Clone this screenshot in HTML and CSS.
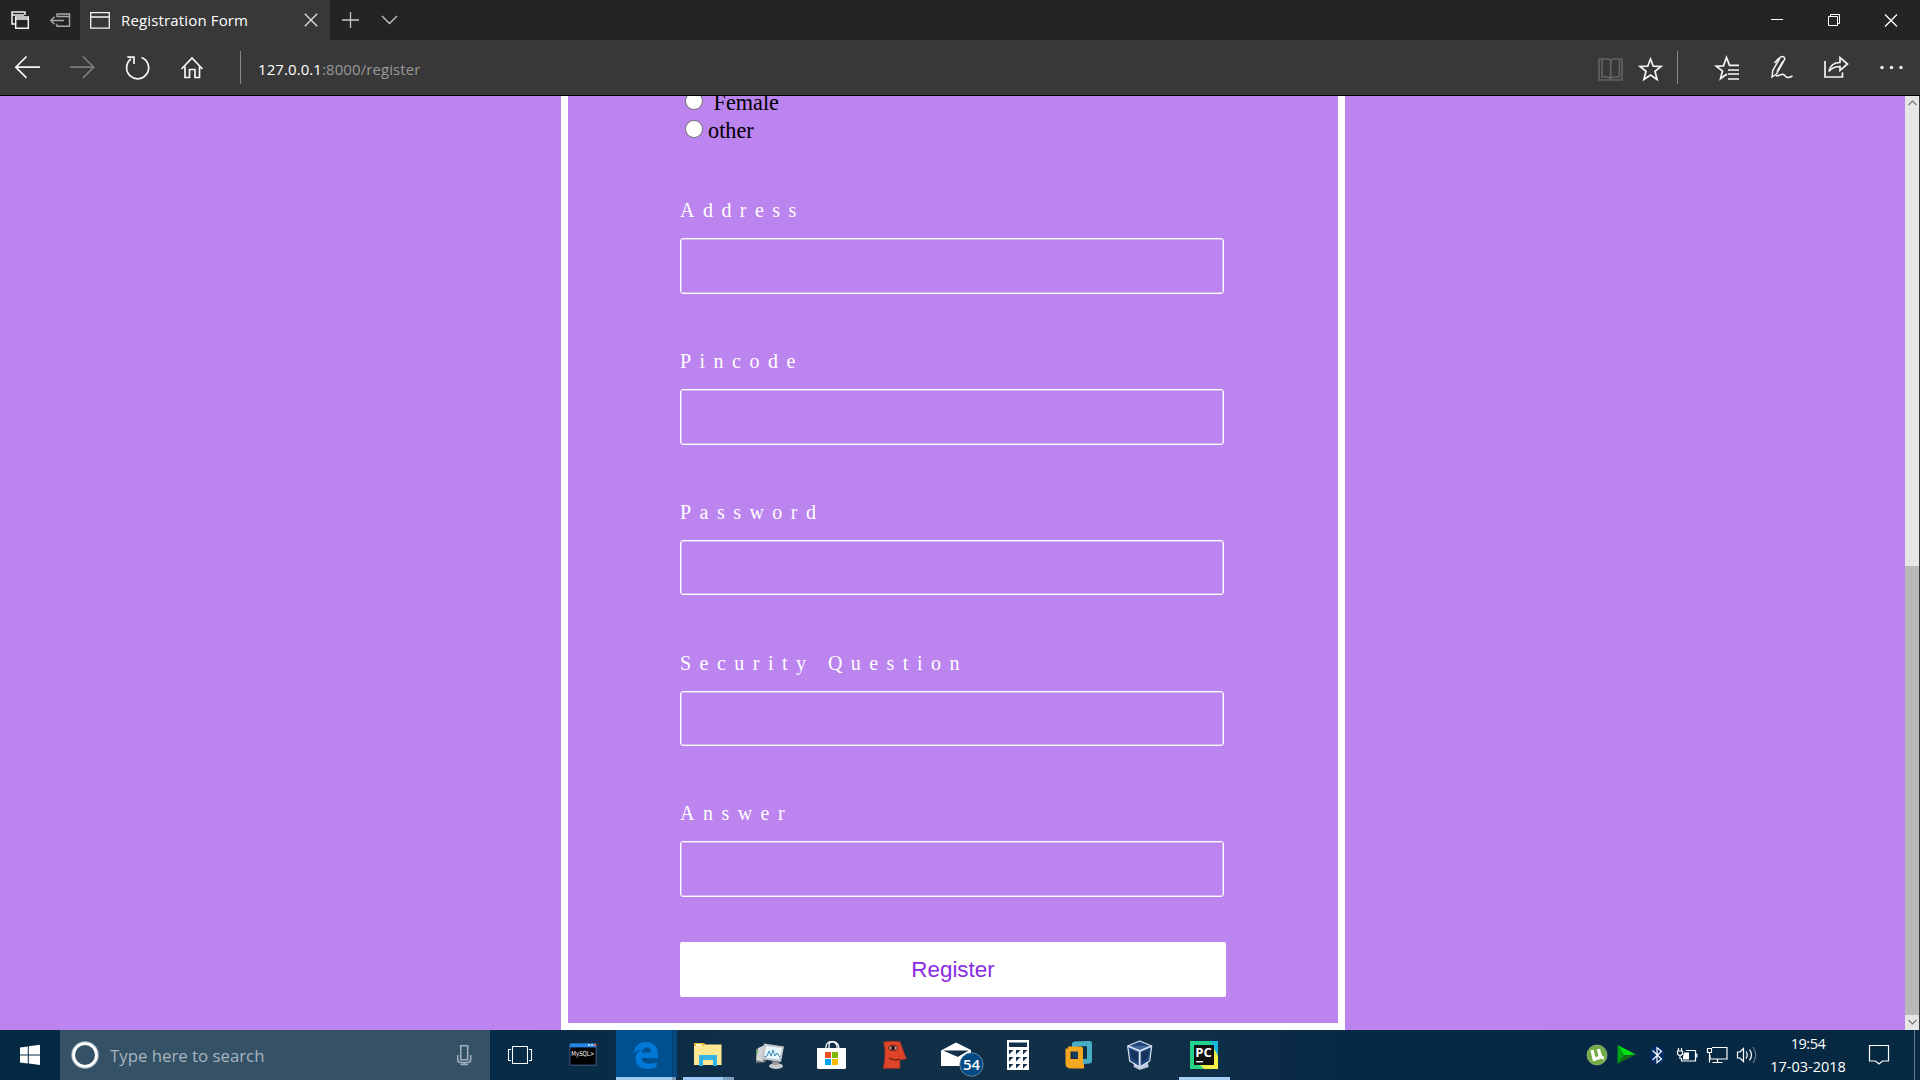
FILE: index.html
```html
<!DOCTYPE html>
<html lang="en">
<head>
<meta charset="utf-8">
<title>Registration Form</title>
<link rel="stylesheet" href="styles.css">
</head>
<body>
<div class="screen">
  <header class="tabs">
    <svg class="tab-tools" width="80" height="40" viewBox="0 0 80 40">
      <g fill="none" stroke="#f2f2f2" stroke-width="1.5"><path d="M15 24h-3V12h13v3"/><path d="M12 15h12" /><path d="M15.700 17h12.600v11.200H15.700zM15.700 19h12.600"/></g>
      <g fill="none" stroke="#a9a9a9" stroke-width="1.400"><path d="M57 17v-3h12.500v12.300H57v-2.500M57 16.500h12.500M51 20.500h13M54.500 16.800l-3.700 3.700 3.700 3.700"/></g>
    </svg>
    <div class="tab">
      <svg width="20" height="17" viewBox="0 0 20 17" fill="none" stroke="#f5f5f5" stroke-width="1.300"><path d="M.7.7h18.600v15.500H.7zM.7 5h18.600"/></svg>
      <span class="tab-title">Registration Form</span>
      <svg width="14" height="14" viewBox="0 0 14 14" stroke="#e0e0e0" stroke-width="1.300"><path d="M.8.8l12.400 12.400M13.200.8L.8 13.200"/></svg>
    </div>
    <svg width="90" height="40" viewBox="0 0 90 40" fill="none" stroke="#c8c8c8" stroke-width="1.300"><path d="M12 20h17M20.500 12v16M52 16l7.500 7.500L67 16"/></svg>
    <svg class="push" width="160" height="40" viewBox="0 0 160 40" fill="none" stroke="#fff" stroke-width="1"><path d="M11 19.500h12M68.500 16.500h9v9h-9zM70.500 16.500v-2h9v9h-2"/><path stroke-width="1.300" d="M125 14.500l12 12M137 14.500l-12 12"/></svg>
  </header>
  <nav class="toolbar">
    <svg width="241" height="55" viewBox="0 40 241 55" fill="none" stroke="#f5f5f5" stroke-width="1.700">
      <path d="M16 67.200h24M26.500 56.500L15.800 67.200l10.700 10.700"/>
      <path stroke="#7c7c7c" d="M70 67.200h23.500M83 56.500l10.700 10.700L83 77.900"/>
      <path d="M141.500 57.500a11 11 0 1 1-10.500 1.500M127.300 57.200h6.700v6.800"/>
      <path d="M181.500 69L192 58l10.500 11M185 66.500v11h4.500v-8h5.500v8h4.500v-11"/>
      <path stroke="#888" stroke-width="1" d="M240.500 51v33"/>
    </svg>
    <span class="address">127.0.0.1<span class="path">:8000/register</span></span>
    <svg class="push" width="330" height="55" viewBox="1590 40 330 55" fill="none" stroke="#f5f5f5" stroke-width="1.700" stroke-linejoin="miter">
      <g stroke="#626262"><path d="M1601 59h-2v21h23V59h-2M1602 59h6.500l2.200 1.500 2.200-1.500h6.500v18h-6.500l-2.200 1.500-2.200-1.500H1602zM1610.700 60v18"/></g>
      <path d="M1650.500 59l2.800 7.200 7.700.3-6 4.800 2.100 8.200-6.600-4.500-6.600 4.500 2.100-8.200-6-4.800 7.700-.3z"/>
      <path stroke="#888" stroke-width="1" d="M1677.500 51v33"/>
      <path d="M1727 74l-6.500 4.700 2-7.700-6.200-4.800 7.200-.3 3-8.400 3 7.900h9.500M1728 70h11M1728 74h11M1728 79h11"/>
      <path stroke-width="1.500" d="M1772 77l.8-6.500 7.700-13.500c2-1.500 5 .3 4 2.700l-8 14.300zM1779 58l-4.500 5M1783 61l-6 10.500M1776 75.500c3.500 1.500 5-2.500 7.500-1s2.500 5 9 1.500"/>
      <path d="M1825 61v16h17.500v-4.500M1829 71.500c1-5.500 5-9 11-9v-5l7.500 6.500-7.500 6.500v-4c-5 0-8 1-11 5z"/>
      <g fill="#f5f5f5" stroke="none"><circle cx="1882" cy="67.500" r="1.700"/><circle cx="1891.500" cy="67.500" r="1.700"/><circle cx="1901" cy="67.500" r="1.700"/></g>
    </svg>
  </nav>

  <main class="viewport">
    <form class="form">
      <div class="gender">
        <label class="option"><i class="radio"></i>&nbsp;&nbsp;Female</label>
        <label class="option"><i class="radio"></i>&nbsp;other</label>
      </div>
      <div class="field"><label for="address">Address</label><input id="address"></div>
      <div class="field"><label for="pincode">Pincode</label><input id="pincode"></div>
      <div class="field"><label for="password">Password</label><input id="password" type="password"></div>
      <div class="field"><label for="question">Security Question</label><input id="question"></div>
      <div class="field"><label for="answer">Answer</label><input id="answer"></div>
      <button class="submit" type="button">Register</button>
    </form>
    <div class="scrollbar">
      <svg width="14" height="15" viewBox="0 0 14 15" fill="none" stroke="#777" stroke-width="1.200"><path d="M3.500 9L7.500 5l4 4"/></svg>
      <div class="thumb"></div>
      <svg width="14" height="15" viewBox="0 0 14 15" fill="none" stroke="#777" stroke-width="1.200"><path d="M3.500 5L7.500 9l4-4"/></svg>
    </div>
  </main>

  <footer class="taskbar">
    <svg width="60" height="50" viewBox="0 0 60 50" fill="#fff"><path d="M20 17.500l7.800-1.100v8H20zM28.800 16.200L40 14.800v9.600H28.800zM20 25.400h7.800v8.100L20 32.400zM28.800 25.400H40V35l-11.200-1.500z"/></svg>
    <div class="search">
      <svg width="50" height="50" viewBox="0 0 50 50" fill="none"><circle cx="25" cy="25" r="12.800" stroke="#a3b2bd" stroke-width="2"/><circle cx="25" cy="25" r="11.400" stroke="#fff" stroke-width="2.800"/></svg>
      <span class="search-text">Type here to search</span>
      <svg class="push" width="50" height="50" viewBox="0 0 50 50" fill="none" stroke="#a4b1bc" stroke-width="1.500"><path d="M20.700 15.700h7v14h-7zM17.700 25v4.500q0 3 3 3h7q3 0 3-3V25M24.200 32v2.500M20.500 34.500h7.500"/></svg>
    </div>
    <svg width="62" height="50" viewBox="0 0 62 50" fill="none" stroke="#fff" stroke-width="1.100"><path d="M22.500 16.500h15v17h-15zM21 19.500h-2.500v11H21M39 19.500h2.500v11H39"/></svg>
    <div class="apps">
      <svg viewBox="0 0 62 50"><rect x="17" y="13" width="28" height="23" rx="1.500" fill="#2d4667"/><rect x="18" y="13.500" width="26" height="4" fill="#2485e8"/><path d="M36 14h2v2h-2zM39 14h2v2h-2z" fill="#a8d4ff"/><path d="M42 14h2v2h-2z" fill="#f06b42"/><rect x="18.500" y="17.500" width="25" height="17" fill="#000"/><text class="mysql" x="19.300" y="25.500" textLength="23" lengthAdjust="spacingAndGlyphs">MySQL&gt;</text></svg>
      <svg viewBox="0 0 62 50"><path fill="#00508f" d="M2 0h56v47H2z"/><path fill="#053f70" d="M58 0h1v47h-1z"/><path fill="#054a83" d="M59 0h4v47h-4z"/><path fill="#9dc9f3" d="M2 47h56v3H2z"/><path fill="#7697b8" d="M58 47h4v3h-4z"/><path fill="#0078d7" d="M19.500 24.500C20.500 16 25.500 12 32 12c8 0 12 6 12 12v4H27.500c.3 4 4 5.700 8 5.700 3 0 5.500-.8 7-1.700v5c-2.300 1.300-5.500 2-9 2-7 0-12-4-12-10.500 0-4.500 2.500-8 6.500-9.500-4.500.3-7.200 3-8.500 5.500zM27.700 22.500h9.600c0-3-1.400-5-4.300-5-3 0-4.700 2-5.300 5z"/></svg>
      <svg viewBox="0 0 62 50"><path fill="#9dc9f3" d="M7 47h40v3H7z"/><path fill="#7d9fbe" d="M47 47h11v3H47z"/><path fill="#e9b932" d="M18 13h10l2 2h15v20H18z"/><path fill="#ffe793" d="M18 16h9l2-1.500h16.500V35H18z"/><path fill="#fff4cb" d="M20 14h6v2h-6z"/><path fill="#38b3e8" d="M23 36V25h18v11h-4v-6H27v6z"/></svg>
      <svg viewBox="0 0 62 50"><path fill="#777" d="M18 19l7-2 3 15-10 1z"/><path fill="#d2d4d5" d="M20 18l7-3-2 17-7-2z"/><path fill="#58c846" d="M18 21h2v2h-2z"/><path fill="#c3c8ca" d="M26 13.500l20 3-3 15.500-20-3z"/><path fill="#e7f6fb" d="M28 16l16 2-3 11.500-15-2z"/><path d="M26 27l3-1 2-5 2 5 2-6 2 6 2-3 3 4" fill="none" stroke="#3a8bbd"/><ellipse cx="38" cy="36" rx="7" ry="3" fill="#c9caca"/><path fill="#9b9c9c" d="M34 31l7 1-1 3h-5z"/></svg>
      <svg viewBox="0 0 62 50"><path d="M26 20v-3c0-7 11-7 11 0v3M29 19v-4c0-5 9-5 10 3" fill="none" stroke="#fff" stroke-width="1.300"/><path fill="#fff" d="M17 18h29v19.500q0 1.500-1.500 1.500h-26Q17 39 17 37.500z"/><path fill="#f25022" d="M25 22h6v6h-6z"/><path fill="#7fba00" d="M32 22h6v6h-6z"/><path fill="#00a4ef" d="M25 29h6v6h-6z"/><path fill="#ffb900" d="M32 29h6v6h-6z"/></svg>
      <svg viewBox="0 0 62 50"><path fill="#de4427" stroke="#7d2d29" stroke-width=".7" d="M21.500 12q8-1.500 16.500-.5l6.500 17.500-6.500 1v8.500h-17q3.500-13 .5-26.500z"/><ellipse cx="31" cy="18" rx="4.500" ry="2.300" fill="#d9a094" stroke="#40130f"/><circle cx="31" cy="18" r="2" fill="#251412"/><path d="M27 28q6 3 11 1" fill="none" stroke="#66200f" stroke-width="1.200"/></svg>
      <svg viewBox="0 0 62 50"><path fill="#fff" d="M17 20.500l15-8 15 7.500v16H17z"/><path fill="#123049" d="M19 20.500h26L34 27z"/><path fill="#fff" d="M34 27l11-6.500V30z"/><circle cx="47.500" cy="34.500" r="11.700" fill="#004983" stroke="#8da2b5" stroke-width=".7"/><text class="badge" x="47.500" y="40" text-anchor="middle">54</text></svg>
      <svg viewBox="0 0 62 50"><path fill="#fff" d="M21 10h22v30H21z"/><path fill="#12304b" d="M23 12.500h18v4.500H23zM23 20h4.500L23 24.500zM30 20h4.500L30 24.500zM37 20h4.500L37 24.500zM23 27h4.500L23 31.500zM30 27h4.500L30 31.500zM37 27h4.500L37 31.500zM23 34h4.500L23 38.500zM30 34h4.500L30 38.500zM37 34h4.500L37 38.500z"/></svg>
      <svg viewBox="0 0 62 50"><g transform="translate(1.500)"><path fill="none" stroke="#49adc8" stroke-width="5" stroke-linejoin="round" d="M25 19v-5l15-.5V31l-12 1"/><path fill="none" stroke="#f4a71f" stroke-width="5" stroke-linejoin="round" d="M18.500 19H31v12.500H20.500M18.500 18.500v15q0 2.500 3 2.500h13"/><path fill="#153f5b" d="M23.500 22h5v6h-5z"/></g></svg>
      <svg viewBox="0 0 62 50"><g transform="translate(-1.300)"><path fill="#bcc7df" d="M25 31l14 0 1 6-9 3-6-3z"/><path fill="#20447c" stroke="#dbe4f1" stroke-width="1.200" stroke-linejoin="round" d="M31 11l12 5-2 15-10 6-10-6-2-15z"/><path fill="#476b9d" stroke="#dbe4f1" stroke-width="1.800" d="M19 16l12 5 12-5M31 21v15"/><path fill="#153259" d="M22 20l7 3v9l-6-4zM40 20l-7 3v9l6-4z"/></g></svg>
      <svg viewBox="0 0 62 50"><defs><linearGradient id="pc" x2="1" y2="1"><stop stop-color="#20d68a"/><stop offset=".45" stop-color="#23cf91"/><stop offset=".5" stop-color="#dced3e"/><stop offset="1" stop-color="#fff04a"/></linearGradient></defs><path fill="#a8cdf4" d="M7 47h51v3H7z"/><path fill="url(#pc)" d="M18 11h28v28H18z"/><path fill="#13b8e0" d="M38 11h8v15z"/><path fill="#28d281" d="M18 25l14 14H18z"/><path fill="#111" d="M22 15h20v20H22z"/><text class="pc" x="23.300" y="27.200" textLength="16.500" lengthAdjust="spacingAndGlyphs">PC</text><path fill="#fff" d="M24 31h7v1.400h-7z"/></svg>
    </div>
    <svg class="push" width="190" height="50" viewBox="1575 1030 190 50" fill="none" stroke="#fff" stroke-width="1.200">
      <circle cx="1597" cy="1055" r="10" fill="#73ac45" stroke="#a7c58b" stroke-width=".7"/><path stroke-width="3.200" d="M1592 1050l2.500 11M1593 1055c1 5 6 4 7 1l-1.500-7M1600 1054c.5 3 1 4 4 4"/>
      <path stroke="none" fill="#00df13" d="M1617.500 1045l18.500 9.500-12 1z"/><path stroke="none" fill="#176b18" d="M1617.500 1064l6.500-8.500 12-1z"/><path stroke="none" fill="#009f14" d="M1617.500 1045v19l6.500-8.500z"/>
      <ellipse cx="1657" cy="1055" rx="7.500" ry="9.500" fill="#002b66" stroke="none"/><path d="M1652.500 1050.500l9 8.500-4.500 3.700v-15l4.500 3.600-9 8.700"/>
      <path d="M1686 1050.500h9.500v10.500h-14v-3M1696.800 1053.500v4M1677.500 1051h5v3q-2.500 3-5 0zM1678.500 1048v3M1681.500 1048v3M1680 1056v3"/><path fill="#fff" stroke="none" d="M1684 1052.500h5v7h-6v-3z"/>
      <path d="M1712 1047.500h15v11.500h-17v-4M1717.500 1059v3M1712.500 1062.500h10M1707.500 1048.500h4v4h-4zM1709.500 1052.500v10"/>
      <path d="M1737.500 1052h2.500l3.500-3.500v13l-3.500-3.500h-2.500zM1746 1051.500q2.500 3.500 0 7M1749.500 1049.500q4 5.500 0 11"/><path stroke="#60788b" d="M1753 1047q5.500 8 0 16"/>
    </svg>
    <div class="clock"><span class="time">19:54</span><span class="date">17-03-2018</span></div>
    <svg width="63" height="50" viewBox="1857 1030 63 50" fill="none" stroke="#fff" stroke-width="1.200"><path d="M1869.500 1045.500h19v15.500h-6l-3.500 3-3.500-3h-6z"/><path stroke="#687d8d" stroke-width="1" d="M1914.500 1030v50"/></svg>
  </footer>
</div>
</body>
</html>
```
FILE: styles.css
```css
* { box-sizing: border-box; }
body { margin: 0; overflow: hidden; }
svg { display: block; flex: none; }
.screen { width: 1920px; height: 1080px; display: flex; flex-direction: column; font-family: "Open Sans", "Noto Sans", sans-serif; }
.push { margin-left: auto; }

.tabs { display: flex; height: 40px; background: #242424; }
.tab { width: 250px; padding: 0 12px 0 10px; display: flex; align-items: center; background: #383838; }
.tab-title { flex: 1; margin-left: 11px; color: #fff; font-size: 15px; letter-spacing: .15px; white-space: nowrap; }
.toolbar { display: flex; align-items: center; height: 56px; background: #383838; border-bottom: 1px solid #000; }
.address { margin: 3px 0 0 17px; color: #fff; font-size: 15px; letter-spacing: .08px; white-space: nowrap; }
.path { color: #999; }

.viewport { display: flex; height: 934px; background: #bb84ee; }
.form { width: 784px; margin: 0 560px 0 561px; padding: 0 112px; border: solid #fff; border-width: 0 7px 7px; font-family: "Liberation Serif", serif; overflow: hidden; }
.gender { height: 103px; padding-left: 5px; margin-top: -7px; margin-bottom: 7px; font-size: 22.2px; }
.option { display: flex; align-items: center; height: 28px; color: #000; }
.radio { width: 17.5px; height: 18px; margin-bottom: 4px; border: 1px solid #707070; border-radius: 50%; background: #fff; }
.field { height: 150.86px; }
.field label { display: block; height: 23px; margin-bottom: 16px; color: #fff; font-size: 20px; line-height: 23px; letter-spacing: 8.47px; white-space: nowrap; }
.field input { display: block; width: 544px; height: 55.7px; border: 1px solid #fff; border-radius: 3px; background: transparent; box-shadow: inset 0 0 0 1px rgba(255,255,255,.4); }
.submit { display: block; width: 546px; height: 55px; margin-top: -11.3px; padding: 0; border: 0; border-radius: 2px; background: #fff; color: #8a2be2; font: 22.4px "Liberation Sans", sans-serif; }
.scrollbar { display: flex; flex-direction: column; width: 15px; background: #e6e6e6; border-right: 1px solid #383838; }
.thumb { height: 449px; margin-top: 455px; background: #b8b8b8; }

.taskbar { display: flex; height: 50px; background: linear-gradient(90deg, #052943 0, #052b46 500px, #122f48 800px, #122f48 1150px, #072946 1350px, #062841 100%); }
.search { display: flex; align-items: center; width: 430px; background: #345166; }
.search-text { color: #a9b5bf; font-size: 16.8px; white-space: nowrap; }
.apps { display: flex; }
.apps svg { width: 62px; height: 50px; overflow: visible; }
.mysql { fill: #fff; font: 7px "DejaVu Sans", sans-serif; }
.badge { fill: #fff; font: 600 15px "Open Sans", sans-serif; }
.pc { fill: #fff; font: bold 12px "Open Sans", sans-serif; }
.clock { display: flex; flex-direction: column; align-items: center; width: 92px; padding: 2px 6px 0 0; color: #fff; font-size: 14.5px; line-height: 23px; white-space: nowrap; }
.time { letter-spacing: -.5px; }
```
